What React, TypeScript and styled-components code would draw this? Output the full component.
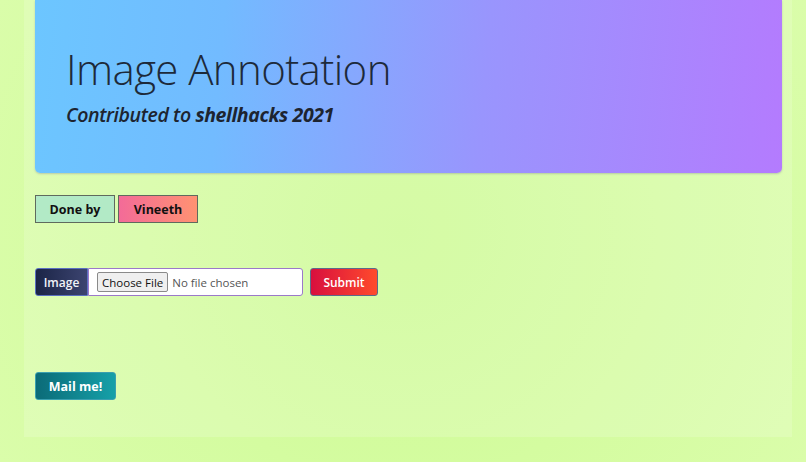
import styled, { createGlobalStyle } from "styled-components";

const GlobalStyle = createGlobalStyle`
  html, body {
    margin: 0;
    padding: 0;
  }
  body {
    min-height: 462px;
    background: radial-gradient(circle at 50% 50%, #cdfb94 0%, #d4fca0 55%, #dafdaa 100%);
    font-family: "Open Sans", "Noto Sans", sans-serif;
    color: #212529;
  }
`;

const Container = styled.div`
  margin-left: 24px;
  width: 768px;
  height: 437px;
  box-sizing: border-box;
  padding: 0 10px 0 11px;
  background: rgba(255, 255, 255, 0.16);
  display: flex;
  flex-direction: column;
`;

const Jumbotron = styled.header`
  height: 173px;
  box-sizing: border-box;
  padding: 41px 31px 0;
  border-radius: 0 0 5px 5px;
  background: linear-gradient(95deg, #6cc6ff 0%, #72bbff 25%, #9995fd 60%, #b47bfe 100%);
  box-shadow: 0 1px 2px rgba(80, 60, 140, 0.25);
`;

const Title = styled.h1`
  margin: 0;
  font-family: "Open Sans", "Noto Sans", sans-serif;
  font-weight: 300;
  font-size: 42px;
  line-height: 56px;
  letter-spacing: -0.6px;
  color: #1d2a3a;
`;

const Subtitle = styled.p`
  margin: 4px 0 0;
  font-size: 19.5px;
  line-height: 28px;
  font-style: italic;
  font-weight: 600;
  letter-spacing: -0.4px;
  color: #1d2430;

  b {
    font-weight: 700;
  }
`;

const Row = styled.div<{ $top: number }>`
  display: flex;
  align-items: stretch;
  margin-top: ${(p) => p.$top}px;
  height: 28px;
`;

const Tag = styled.div<{ $bg: string }>`
  width: 80px;
  box-sizing: border-box;
  border: 1px solid #5f6a5e;
  background: ${(p) => p.$bg};
  display: flex;
  align-items: center;
  justify-content: center;
  font-size: 12.5px;
  font-weight: 700;
  color: #111;
  & + & {
    margin-left: 3px;
  }
`;

const Prepend = styled.span`
  width: 53px;
  box-sizing: border-box;
  border: 1px solid #5a6fc0;
  border-radius: 3px 0 0 3px;
  background: linear-gradient(90deg, #1b2547 0%, #3c4470 100%);
  color: #f1f3f8;
  font-size: 12px;
  font-weight: 600;
  display: flex;
  align-items: center;
  justify-content: center;
`;

const FileBox = styled.label`
  width: 215px;
  box-sizing: border-box;
  border: 1px solid #9b79c9;
  border-radius: 0 3px 3px 0;
  background: #fff;
  display: flex;
  align-items: center;
  padding-left: 8px;
  font-size: 11.5px;
  color: #555;
`;

const ChooseButton = styled.span`
  height: 20px;
  box-sizing: border-box;
  padding: 0 4px;
  border: 1px solid #8a8a8a;
  border-radius: 2px;
  background: #efefef;
  color: #111;
  display: flex;
  align-items: center;
  margin-right: 4px;
`;

const ActionButton = styled.button<{ $bg: string; $w: number; $ml?: number }>`
  width: ${(p) => p.$w}px;
  height: 28px;
  margin-left: ${(p) => p.$ml ?? 0}px;
  box-sizing: border-box;
  border: 1px solid #5c6a8a;
  border-radius: 3px;
  background: ${(p) => p.$bg};
  color: #fff;
  font-family: "Open Sans", "Noto Sans", sans-serif;
  font-size: 12px;
  font-weight: 600;
  padding: 0;
  cursor: pointer;
`;

const MailButton = styled(ActionButton)`
  font-weight: 700;
  font-size: 12.5px;
  border-color: #3a9fb0;
`;

export default function App() {
  return (
    <>
      <GlobalStyle />
      <Container>
        <Jumbotron>
          <Title>Image Annotation</Title>
          <Subtitle>
            Contributed to <b>shellhacks 2021</b>
          </Subtitle>
        </Jumbotron>
        <Row $top={22}>
          <Tag $bg="#b2eac6">Done by</Tag>
          <Tag $bg="linear-gradient(90deg, #f36b98 0%, #ff9272 100%)">Vineeth</Tag>
        </Row>
        <Row $top={45}>
          <Prepend>Image</Prepend>
          <FileBox>
            <ChooseButton>Choose File</ChooseButton>
            No file chosen
          </FileBox>
          <ActionButton $w={68} $ml={7} $bg="linear-gradient(90deg, #d80f3e 0%, #ff4a2c 100%)">
            Submit
          </ActionButton>
        </Row>
        <Row $top={76}>
          <MailButton $w={81} $bg="linear-gradient(90deg, #0b6b78 0%, #16a0a8 100%)">
            Mail me!
          </MailButton>
        </Row>
      </Container>
    </>
  );
}
